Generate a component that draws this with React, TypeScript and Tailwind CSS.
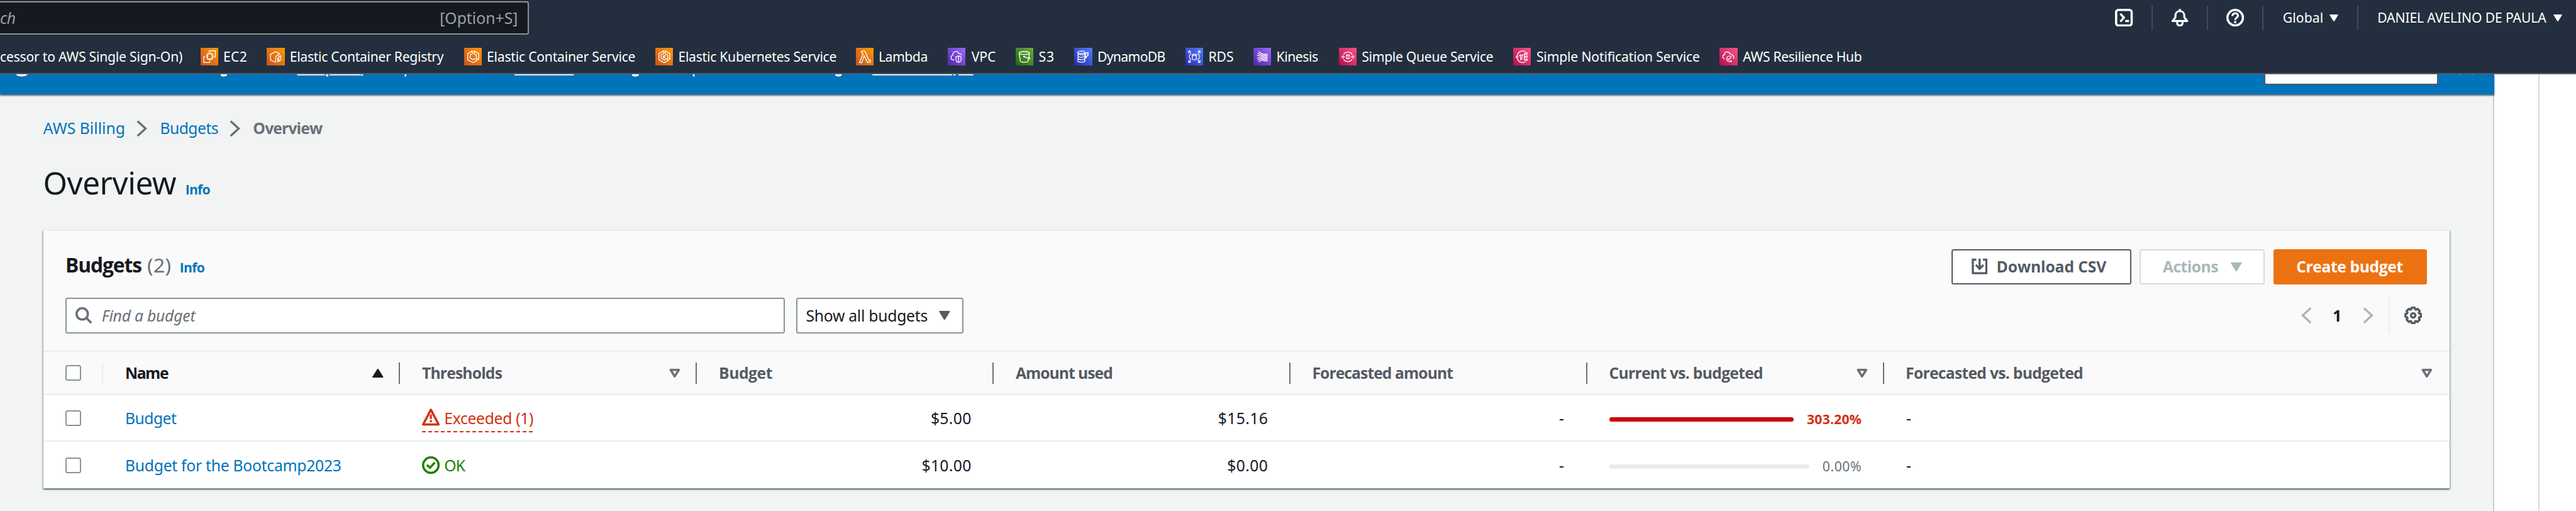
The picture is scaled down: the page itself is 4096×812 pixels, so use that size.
import React from "react";

type Service = {
  name: string;
  icon: React.ReactNode;
  tile: string;
  cell: string;
  label: string;
};

const ORANGE = "from-[#c8511b] to-[#ff9900]";
const PURPLE = "from-[#4d27a8] to-[#a166ff]";
const GREEN = "from-[#1b660f] to-[#6cae3e]";
const BLUE = "from-[#2e27ad] to-[#527fff]";
const PINK = "from-[#b0084d] to-[#ff4f8b]";

const services: Service[] = [
  {
    name: "EC2",
    tile: ORANGE,
    cell: "w-[60px]",
    label: "ml-[4.6px] tracking-[0.2px]",
    icon: (
      <>
        <path d="M15.2 8V5.4H26.4V16.6H23.8M8.4 15.8H5.6V26.4H16.4V23.6" />
        <rect x="12.4" y="11" width="8.6" height="9" />
        <path d="M14.4 11V8.8M16.7 11V8.8M19 11V8.8M14.4 20V22.2M16.7 20V22.2M19 20V22.2M12.4 13.2H10.2M12.4 15.5H10.2M12.4 17.8H10.2M21 13.2H23.2M21 15.5H23.2M21 17.8H23.2" />
      </>
    ),
  },
  {
    name: "Elastic Container Registry",
    tile: ORANGE,
    cell: "w-[177.5px]",
    label: "ml-[4.6px] tracking-[-0.17px]",
    icon: (
      <>
        <path d="M14.6 25.8L7 21.8V11.8L15.8 7L23.6 11L17.4 14.6L16.2 17V26.6" />
        <path d="M20 26V18.4L21.6 16.4L25.2 14V21.6L22 24.4V18.6" />
      </>
    ),
  },
  {
    name: "Elastic Container Service",
    tile: ORANGE,
    cell: "w-[172.5px]",
    label: "ml-[4.6px] tracking-[-0.13px]",
    icon: (
      <>
        <path d="M14.8 5.6L6.4 10.6V21.6L16 26.6L23.6 22.4L19.4 19.6L16.4 21.4L11 18.6V12.8L14.8 10.6Z" />
        <path d="M17.8 5.6L26.2 10.6V20.8L22 18.4V13L17.8 10.6Z" />
      </>
    ),
  },
  {
    name: "Elastic Kubernetes Service",
    tile: ORANGE,
    cell: "w-[180.5px]",
    label: "ml-[4.6px] tracking-[-0.15px]",
    icon: (
      <>
        <path d="M15 5.4L6.4 10.4V21.6L16 26.8L23.6 22.6L19.6 20L16.4 21.8L10.6 18.8V12.6L15 10.2Z" />
        <path d="M17.6 5.4L26.2 10.4V21L22.2 18.6V12.8L17.6 10.2Z" />
        <path d="M14.6 13.2V18.8M18.6 13.2L14.8 16L18.6 18.8" />
      </>
    ),
  },
  {
    name: "Lambda",
    tile: ORANGE,
    cell: "w-[83px]",
    label: "ml-[4.6px] tracking-[-0.26px]",
    icon: (
      <path d="M10.4 5.8H16L23.2 22.4L26 21.6V25.8L20.8 26.6L14.9 14L10.6 26.6H6.2L12.8 11.2L11.8 9.4H10.4Z" />
    ),
  },
  {
    name: "VPC",
    tile: PURPLE,
    cell: "w-[61px]",
    label: "ml-[5.3px] tracking-[-0.05px]",
    icon: (
      <>
        <path d="M11.4 21.8H10.4C7.6 21.8 5.8 20 5.8 17.6C5.8 15.2 7.2 13.8 9 13.2C8.6 9.2 11.4 6.6 14.6 6.6C17.4 6.6 19.4 8.2 20.2 10.8C22.6 10 24.4 11.6 24.8 13.4" />
        <path d="M19.4 14.6L24 16V21.4C24 24 22 25.4 19.4 26.2C16.8 25.4 14.8 24 14.8 21.4V16ZM19.4 15V26" />
      </>
    ),
  },
  {
    name: "S3",
    tile: GREEN,
    cell: "w-[53.1px]",
    label: "ml-[4.9px] tracking-[0.4px]",
    icon: (
      <>
        <ellipse cx="15.4" cy="9.4" rx="9.2" ry="2.6" />
        <path d="M6.2 9.4L8.4 24C9.6 26.6 21.2 26.6 22.4 24L24.6 9.4M15.4 16L24 19.4C26.2 20.2 26.2 18.6 23.8 17" />
        <circle cx="15.2" cy="16" r="0.9" fill="white" />
      </>
    ),
  },
  {
    name: "DynamoDB",
    tile: BLUE,
    cell: "w-[99.9px]",
    label: "ml-[4.7px] tracking-[-0.37px]",
    icon: (
      <>
        <ellipse cx="13" cy="8" rx="6.2" ry="2.2" />
        <path d="M6.8 8V10.8C8 13.2 18 13.2 19.2 11M6.8 12V15C8 17.6 17 17.6 18 15.8M6.8 16.4V19.4C8 22 18 22 19.2 19.6M6.8 20.8V24C8 26.6 18 26.6 19.2 24V8M21.6 8.6H25.6L23.8 12H26L19.8 19L21.2 14.6H19.4Z" />
      </>
    ),
  },
  {
    name: "RDS",
    tile: BLUE,
    cell: "w-[61.5px]",
    label: "ml-[4.9px] tracking-[-0.08px]",
    icon: (
      <>
        <ellipse cx="16" cy="12.6" rx="3.6" ry="1.4" />
        <path d="M12.4 12.6V20.4C13 22 19 22 19.6 20.4V12.6M10 11.8H8.2C6.8 14 6.8 18 8.2 20.2H10M22 11.8H23.8C25.2 14 25.2 18 23.8 20.2H22" />
        <path d="M5.8 9.6V5.8H9.6M5.8 5.8L10 10M22.4 5.8H26.2V9.6M26.2 5.8L22 10M5.8 22.4V26.2H9.6M5.8 26.2L10 22M26.2 22.4V26.2H22.4M26.2 26.2L22 22" />
      </>
    ),
  },
  {
    name: "Kinesis",
    tile: PURPLE,
    cell: "w-[76.65px]",
    label: "ml-[4.6px] tracking-[-0.26px]",
    icon: (
      <path d="M9.6 6.6C13 9.4 15 11.2 18.4 11.2H25.6M7.4 9.8C12.4 12.6 14.4 13.6 18.4 13.6H25.6M6.6 13.6C11 14.4 14 16 18.4 16H25.6M6.6 18.4C11 18 14 16.4 18.4 18.4H25.6M7.4 22C12.4 20 14.4 18.6 18.4 20.8H25.6M9.6 25.4C13 22.6 15 21 18.4 23.2H25.6" />
    ),
  },
  {
    name: "Simple Queue Service",
    tile: PINK,
    cell: "w-[157.35px]",
    label: "ml-[4.8px] tracking-[-0.175px]",
    icon: (
      <>
        <path d="M8.4 12.2C11 6.4 21 6.4 23.8 12.2M8.4 20.4C11 26.2 21 26.2 23.8 20.4M12.4 13H19.8M12.4 19.4H19.8M14.2 13V19.4M18 13V19.4" />
        <circle cx="7.2" cy="16.3" r="1.7" />
        <circle cx="25" cy="16.3" r="1.7" />
        <path d="M10.4 16.3H11.4M20.8 16.3H21.8" />
      </>
    ),
  },
  {
    name: "Simple Notification Service",
    tile: PINK,
    cell: "w-[186px]",
    label: "ml-[4.8px] tracking-[-0.1px]",
    icon: (
      <>
        <path d="M7.4 14C9 5.6 18.4 3.6 22.4 7.4M7.4 18.4C9 26.8 17.4 28.2 22 25M11.6 13H17.4L15.6 16.4V20.4L13.4 21.6V16.4ZM20 9.4V22.6M20 10.6H22.4M20 16H22.4M20 21.6H22.4" />
        <circle cx="7" cy="16.2" r="1.6" />
        <circle cx="24" cy="10.4" r="1.7" />
        <circle cx="24" cy="16" r="1.7" />
        <circle cx="24" cy="21.6" r="1.7" />
      </>
    ),
  },
  {
    name: "AWS Resilience Hub",
    tile: PINK,
    cell: "w-[160px]",
    label: "ml-[4.9px] tracking-[-0.2px]",
    icon: (
      <>
        <path d="M9.6 19.8C7.4 19.6 6 18 6 16C6 14 7.4 12.6 9.2 12.2C9 9 11.2 7.2 13.8 7.2C16.2 7.2 18 8.6 18.8 10.8C21.4 10.4 22.6 11.6 22.8 13.2C25 13.6 26 15 26 16.6C26 17.8 25.6 18.8 24.8 19.6" />
        <path d="M21.4 16.2A5 5 0 1 0 21.6 23.4M21.6 23.4H18.8M21.6 23.4V26M14.6 19.6L16.6 21.6L21.4 16.4" />
      </>
    ),
  },
];

function gearPath() {
  const pts: string[] = [];
  const teeth = 8;
  for (let i = 0; i < teeth; i++) {
    const a = (i * 2 * Math.PI) / teeth;
    [
      [-0.2, 7.1],
      [0.2, 7.1],
      [0.3, 5.7],
      [0.485, 5.7],
    ].forEach(([d, r]) => {
      pts.push(`${(8 + r * Math.sin(a + d)).toFixed(2)} ${(8 - r * Math.cos(a + d)).toFixed(2)}`);
    });
  }
  return `M${pts.join("L")}Z`;
}

function Caret({ className }: { className: string }) {
  return (
    <svg viewBox="0 0 10 8" className={className}>
      <path d="M0.8 0H9.2Q10.2 0 9.8 0.9L5.6 7.6Q5 8.3 4.4 7.6L0.2 0.9Q-0.2 0 0.8 0Z" fill="currentColor" />
    </svg>
  );
}

function FilterMark({ className }: { className: string }) {
  return (
    <svg viewBox="0 0 10 8" className={className}>
      <path d="M1.3 1H8.7L5 6.9Z" fill="none" stroke="currentColor" strokeWidth="2" strokeLinejoin="round" />
    </svg>
  );
}

function Chevron({ flip, className }: { flip?: boolean; className: string }) {
  return (
    <svg viewBox="0 0 10 15" className={className}>
      <path d={flip ? "M9 0.6L1.4 7.5L9 14.4" : "M1 0.6L8.6 7.5L1 14.4"} fill="none" stroke="currentColor" strokeWidth="2" />
    </svg>
  );
}

function Checkbox() {
  return <span className="ml-5 block size-[14px] rounded-[2px] border-[1.2px] border-[#879596] bg-white" />;
}

function IconCell({ children }: { children: React.ReactNode }) {
  return (
    <div className="flex h-[22px] w-[50.05px] items-center justify-center border-r-[1.2px] border-[#414d5c]">
      <svg viewBox="0 0 16 16" className="size-4" fill="none" stroke="white" strokeWidth="2">
        {children}
      </svg>
    </div>
  );
}

function TopBar() {
  return (
    <header className="h-[67px] shrink-0 border-b-[1.2px] border-[#545b64] bg-[#232f3e] text-white">
      <div className="flex h-8 items-center justify-between">
        <div className="flex h-[30px] w-[476.3px] items-center justify-between rounded-r-[2px] border-[1.2px] border-l-0 border-[#879596] bg-[#16191f] pr-[8.6px] text-sm text-[#95a5a6]">
          <span className="whitespace-nowrap tracking-[-0.2px] italic">ch</span>
          <span className="whitespace-nowrap tracking-[0.02px]">[Option+S]</span>
        </div>
        <div className="flex items-center text-xs">
          <IconCell>
            <rect x="1" y="1" width="14" height="14" rx="2" />
            <path d="M4.8 4.4L8 8L4.8 11.6" strokeWidth="1.9" />
            <path d="M9.2 11H12.6" />
          </IconCell>
          <IconCell>
            <path d="M1.4 11H14.6L12 7.6V6.4C12 3.6 10.2 2 8 2C5.8 2 4 3.6 4 6.4V7.6Z" strokeWidth="1.8" strokeLinejoin="round" />
            <path d="M8 0.2V2" />
            <path d="M5.6 11.4V12.6C5.6 14.2 6.6 15 8 15C9.4 15 10.4 14.2 10.4 12.6V11.4" strokeWidth="1.8" />
          </IconCell>
          <IconCell>
            <circle cx="8" cy="8" r="7" />
            <path d="M5.5 6.5C5.5 4.9 6.6 4 8 4C9.4 4 10.5 4.9 10.5 6.2C10.5 7.9 8 8 8 10" strokeWidth="1.8" />
            <path d="M8 11V13" strokeWidth="1.9" />
          </IconCell>
          <div className="flex h-[22px] w-[85.5px] items-center border-r-[1.2px] border-[#414d5c] pl-[17.2px]">
            <span className="w-[42px] whitespace-nowrap tracking-[0.06px]">Global</span>
            <Caret className="h-[6.2px] w-2" />
          </div>
          <div className="flex w-[196px] items-center pl-[17px]">
            <span className="w-[158.8px] whitespace-nowrap tracking-[-0.08px]">DANIEL AVELINO DE PAULA</span>
            <Caret className="h-[6.2px] w-2" />
          </div>
        </div>
      </div>
      <nav className="flex h-[34px] items-center pt-[4px] text-xs">
        <div className="flex w-[162.8px] shrink-0">
          <span className="whitespace-nowrap tracking-[-0.13px]">cessor to AWS Single Sign-On)</span>
        </div>
        <div className="flex pl-[17.7px]">
          {services.map((s) => (
            <a key={s.name} className={`flex shrink-0 items-center whitespace-nowrap ${s.cell}`}>
              <span className={`block size-4 shrink-0 bg-linear-to-tr ${s.tile}`}>
                <svg viewBox="0 0 32 32" className="block size-4" fill="none" stroke="white" strokeWidth="1.5" strokeLinejoin="round">
                  {s.icon}
                </svg>
              </span>
              <span className={s.label}>{s.name}</span>
            </a>
          ))}
        </div>
      </nav>
    </header>
  );
}

function FlashBar() {
  return (
    <div className="flex h-[18px] shrink-0 items-start justify-between bg-[#0073bb] shadow-[0_1px_1px_0_rgba(0,28,36,0.5),0_1px_2px_0_rgba(0,28,36,0.3)]">
      <svg viewBox="0 0 1780 5" className="h-[2.5px] w-[890px]" fill="white">
        <path d="M27 0H49Q45 4 38 4Q31 4 27 0ZM397 0H409Q408 4 403 4Q398 4 397 2ZM535 0H585V2H535ZM587 0H591V4H587ZM593 0H650V2H593ZM651 0H654L653 3H651ZM729 0H732V4H729ZM927 0H1034V2H927ZM1139 0H1152Q1151 4 1146 4Q1140 4 1139 2ZM1249 0H1252V4H1249ZM1506 0H1518Q1517 4 1512 4Q1507 4 1506 2ZM1573 0H1717V2H1573ZM1719 0H1723V2H1719ZM1728 0H1755V2H1728Z" />
      </svg>
      <div className="flex items-start">
        <div className="h-[9.6px] w-[156.7px] rounded-b-[2px] border-[1.2px] border-t-0 border-[#545b64] bg-white" />
        <svg viewBox="0 0 24 2" className="mr-[19px] ml-[19.2px] h-px w-3" fill="white" fillOpacity="0.7">
          <path d="M0.4 0H2.6L1.5 1.6ZM21.4 0H23.6L22.5 1.6Z" />
        </svg>
      </div>
    </div>
  );
}

const columns = [
  { title: "Name", pad: "pl-5 tracking-[-0.82px] text-[#16191f]", mark: "sort" },
  { title: "Thresholds", pad: "pl-5 tracking-[-0.48px]", mark: "filter" },
  { title: "Budget", pad: "pl-5 tracking-[-0.26px]", mark: "" },
  { title: "Amount used", pad: "pl-5 tracking-[-0.57px]", mark: "" },
  { title: "Forecasted amount", pad: "pl-[19.7px] tracking-[-0.53px]", mark: "" },
  { title: "Current vs. budgeted", pad: "pl-[19.7px] tracking-[-0.41px]", mark: "filter" },
  { title: "Forecasted vs. budgeted", pad: "pl-[19.5px] tracking-[-0.41px]", mark: "filter" },
];

const GRID = "grid grid-cols-[53.8px_repeat(6,267.45px)_1fr] items-center";

const BOLD = "font-['Open_Sans','Noto_Sans',sans-serif] font-bold";

const rows = [
  {
    name: "Budget",
    nameTrack: "tracking-[-0.31px]",
    exceeded: true,
    budget: "$5.00",
    used: "$15.16",
    pct: "303.20%",
    height: "h-[42px] border-b-[1.2px] border-[#eaeded]",
  },
  {
    name: "Budget for the Bootcamp2023",
    nameTrack: "tracking-[-0.15px]",
    exceeded: false,
    budget: "$10.00",
    used: "$0.00",
    pct: "0.00%",
    height: "h-[42px]",
  },
];

function BudgetsCard() {
  return (
    <section className="ml-[39px] w-[2168.2px] bg-white shadow-[0_1px_1px_0_rgba(0,28,36,0.4),1px_1px_1px_0_rgba(0,28,36,0.2),-1px_1px_1px_0_rgba(0,28,36,0.2)]">
      <div className="h-[110px] border-t-[1.2px] border-b-[1.2px] border-[#eaeded] bg-[#fafafa] pt-4">
        <div className="flex h-8 items-center justify-between pr-[20.3px] pl-5">
          <div className="flex items-baseline pb-[3px] whitespace-nowrap">
            <h2 className={`w-[73.6px] text-lg leading-8 tracking-[-0.63px] text-[#16191f] ${BOLD}`}>Budgets</h2>
            <span className="w-[29.4px] text-lg leading-8 tracking-[0.27px] text-[#687078]">(2)</span>
            <a className={`text-xs tracking-[-0.43px] text-[#0073bb] ${BOLD}`}>Info</a>
          </div>
          <div className={`flex text-sm whitespace-nowrap ${BOLD}`}>
            <button className="mr-[7.8px] flex h-8 w-[161.8px] items-center rounded-[2px] border-[1.2px] border-[#545b64] bg-white pl-[16.8px] text-[#545b64]">
              <svg viewBox="0 0 14 14" className="mr-[8.2px] h-[14px] w-[14.4px]" fill="none" stroke="currentColor" strokeWidth="1.9">
                <path d="M4 0.9H0.9V13.1H13.1V0.9H10" />
                <path d="M7 0V8.6M3.6 5.6L7 9.2L10.4 5.6" />
              </svg>
              <span className="tracking-[-0.07px]">Download CSV</span>
            </button>
            <button className="mr-2 flex h-8 w-[112.4px] items-center rounded-[2px] border-[1.2px] border-[#d5dbdb] bg-white pl-[19.6px] text-[#aab7b8]">
              <span className="w-[61.4px] text-left tracking-[-0.3px]">Actions</span>
              <Caret className="h-2 w-[10px]" />
            </button>
            <button className="flex h-8 w-[138.6px] items-center rounded-[2px] bg-[#ec7211] pl-[20.6px] text-white">
              <span className="tracking-[-0.23px]">Create budget</span>
            </button>
          </div>
        </div>
        <div className="mt-3 flex h-8 items-center justify-between pr-5 pl-5 text-sm">
          <div className="flex">
            <div className="mr-[10.2px] flex h-8 w-[648px] items-center rounded-[2px] border-[1.2px] border-[#879596] bg-white pl-[7.8px] text-[#687078]">
              <svg viewBox="0 0 15 15" className="mr-[8.8px] size-[15px]" fill="none" stroke="currentColor" strokeWidth="2">
                <circle cx="6.1" cy="6.1" r="5.1" />
                <path d="M9.7 9.7L14.3 14.3" />
              </svg>
              <span className="tracking-[-0.12px] italic">Find a budget</span>
            </div>
            <div className="flex h-8 w-[150.9px] items-center rounded-[2px] border-[1.2px] border-[#879596] bg-white pl-[7.8px] text-[#16191f]">
              <span className="w-[119.8px] whitespace-nowrap tracking-[-0.14px]">Show all budgets</span>
              <Caret className="h-2 w-[10px] text-[#545b64]" />
            </div>
          </div>
          <div className="flex items-center">
            <Chevron flip className="h-[15px] w-[9.6px] text-[#aab7b8]" />
            <span className={`w-[46px] text-center text-[#16191f] ${BOLD}`}>1</span>
            <Chevron className="h-[15px] w-[9.6px] text-[#aab7b8]" />
            <span className="mr-[13px] ml-[13.6px] h-8 w-[1.2px] bg-[#eaeded]" />
            <svg viewBox="0 0 16 16" className="mr-[5px] size-4 text-[#545b64]" fill="none" stroke="currentColor" strokeWidth="1.9" strokeLinejoin="round">
              <path d={gearPath()} />
              <circle cx="8" cy="8" r="2" />
            </svg>
          </div>
        </div>
      </div>

      <div className={`${GRID} ${BOLD} h-[39px] border-b-[1.2px] border-[#eaeded] bg-[#fafafa] text-sm text-[#545b64]`}>
        <div className="flex h-[19px] items-center border-r-[1.2px] border-[#eaeded]">
          <Checkbox />
        </div>
        {columns.map((c, i) => (
          <div
            key={c.title}
            className={`flex h-[19px] items-center justify-between whitespace-nowrap ${c.pad} ${
              i < columns.length - 1 ? "border-r-[1.2px] border-[#687078] pr-[13.8px]" : "pr-[15.5px]"
            }`}
          >
            <span>{c.title}</span>
            {c.mark === "sort" && <Caret className="h-2 w-[10px] rotate-180" />}
            {c.mark === "filter" && <FilterMark className="h-2 w-[10px] text-[#687078]" />}
          </div>
        ))}
      </div>

      {rows.map((r) => (
        <div key={r.name} className={`${GRID} ${r.height} text-sm whitespace-nowrap text-[#16191f]`}>
          <Checkbox />
          <a className={`pl-5 text-[#0073bb] ${r.nameTrack}`}>{r.name}</a>
          <div className="flex pl-5">
            {r.exceeded ? (
              <span className="mt-[3px] flex h-[23px] items-start border-b-[1.2px] border-dashed border-[#d13212] text-[#d13212]">
                <svg viewBox="0 0 16 16" className="mt-[1px] mr-[4px] size-4" fill="none" stroke="currentColor" strokeWidth="2">
                  <path d="M8 1.8L15 15H1Z" strokeLinejoin="round" />
                  <path d="M8 6V10M8 11V13" strokeWidth="1.8" />
                </svg>
                <span className="w-[80px] leading-5 tracking-[-0.18px]">Exceeded (1)</span>
              </span>
            ) : (
              <span className="flex items-center text-[#1d8102]">
                <svg viewBox="0 0 16 16" className="mr-[4px] size-4" fill="none" stroke="currentColor" strokeWidth="2">
                  <circle cx="8" cy="8" r="7" />
                  <path d="M4.4 7.8L7.2 10.4L11.6 5.6" />
                </svg>
                <span className="tracking-[-0.5px]">OK</span>
              </span>
            )}
          </div>
          <span className="pr-[19.8px] text-right tracking-[0.2px]">{r.budget}</span>
          <span className="pr-[20px] text-right tracking-[0.24px]">{r.used}</span>
          <span className="pr-[20.8px] text-right">-</span>
          <div className="flex items-center pt-0.5 pr-[20.2px] pl-[19.8px] text-xs">
            <span className={`h-1 flex-1 rounded-[2px] ${r.exceeded ? "mr-[12.2px] bg-[#cc0000]" : "mr-[11.6px] bg-[#eaeded]"}`} />
            <span className={r.exceeded ? `tracking-[0.11px] text-[#d13212] ${BOLD}` : "tracking-[0.3px] text-[#687078]"}>{r.pct}</span>
          </div>
          <span className="pl-5">-</span>
        </div>
      ))}
    </section>
  );
}

export default function App() {
  return (
    <div className="flex h-[460.2px] w-[2321px] flex-col overflow-hidden bg-white font-['Noto_Sans','Open_Sans',sans-serif] [zoom:1.7648]">
      <TopBar />
      <div className="flex flex-1">
        <main className="w-[2247px] bg-[#f2f3f3] shadow-[inset_-1px_0_0_0_rgba(0,28,36,0.2)]">
          <FlashBar />
          <div className="flex h-[61px] items-center pl-[39px] text-sm whitespace-nowrap">
            <a className="w-[84.2px] tracking-[0.03px] text-[#0073bb]">AWS Billing</a>
            <Chevron className="mr-[11.4px] h-[15px] w-[9.6px] text-[#687078]" />
            <a className="w-[62.8px] tracking-[-0.3px] text-[#0073bb]">Budgets</a>
            <Chevron className="mr-[11.4px] h-[15px] w-[9.6px] text-[#687078]" />
            <span className={`tracking-[-0.48px] text-[#687078] ${BOLD}`}>Overview</span>
          </div>
          <div className="flex h-[61px] items-baseline pl-[38.8px] whitespace-nowrap">
            <h1 className="w-[128.2px] text-[28px] leading-[36.4px] tracking-[-0.27px] text-[#16191f]">Overview</h1>
            <a className={`text-xs tracking-[-0.43px] text-[#0073bb] ${BOLD}`}>Info</a>
          </div>
          <BudgetsCard />
        </main>
        <div className="ml-[40px] w-[34px] border-l-[1.2px] border-[#d5dbdb]" />
      </div>
    </div>
  );
}
